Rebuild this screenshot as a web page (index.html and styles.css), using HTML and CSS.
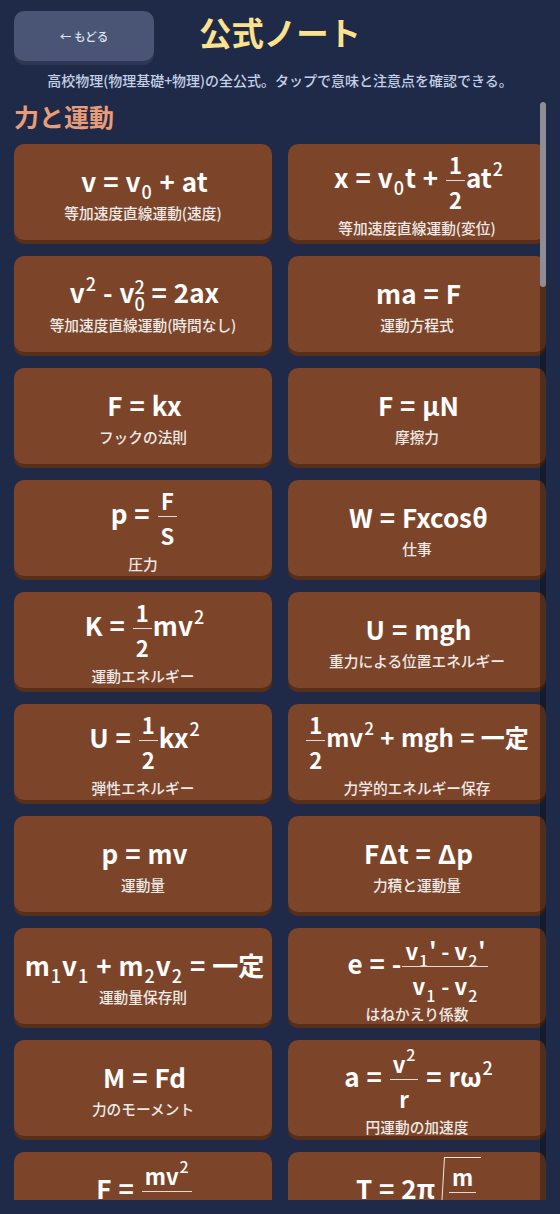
FILE: index.html
```html
<!DOCTYPE html>
<html lang="ja">
<head>
<meta charset="utf-8">
<title>公式ノート</title>
<link rel="stylesheet" href="styles.css">
</head>
<body>
<div class="page">
  <header class="header">
    <button class="back">← もどる</button>
    <h1 class="title">公式ノート</h1>
    <span></span>
  </header>
  <p class="lead">高校物理(物理基礎+物理)の全公式。タップで意味と注意点を確認できる。</p>
  <div class="scroll">
    <div class="track"></div>
    <div class="thumb"></div>
    <h2 class="section">力と運動</h2>
    <div class="grid">
      <div class="card"><div class="f">v = v<sub>0</sub> + at</div><div class="l">等加速度直線運動(速度)</div></div>
      <div class="card"><div class="f">x = v<sub>0</sub>t + <span class="frac"><span>1</span><span class="d">2</span></span>at<sup>2</sup></div><div class="l">等加速度直線運動(変位)</div></div>
      <div class="card"><div class="f">v<sup>2</sup> - v<span class="ss"><sup>2</sup><sub>0</sub></span> = 2ax</div><div class="l">等加速度直線運動(時間なし)</div></div>
      <div class="card"><div class="f">ma = F</div><div class="l">運動方程式</div></div>
      <div class="card"><div class="f">F = kx</div><div class="l">フックの法則</div></div>
      <div class="card"><div class="f">F = μN</div><div class="l">摩擦力</div></div>
      <div class="card"><div class="f">p = <span class="frac"><span>F</span><span class="d">S</span></span></div><div class="l">圧力</div></div>
      <div class="card"><div class="f">W = Fxcosθ</div><div class="l">仕事</div></div>
      <div class="card"><div class="f">K = <span class="frac"><span>1</span><span class="d">2</span></span>mv<sup>2</sup></div><div class="l">運動エネルギー</div></div>
      <div class="card"><div class="f">U = mgh</div><div class="l">重力による位置エネルギー</div></div>
      <div class="card"><div class="f">U = <span class="frac"><span>1</span><span class="d">2</span></span>kx<sup>2</sup></div><div class="l">弾性エネルギー</div></div>
      <div class="card"><div class="f fit"><span class="frac"><span>1</span><span class="d">2</span></span>mv<sup>2</sup> + mgh = 一定</div><div class="l">力学的エネルギー保存</div></div>
      <div class="card"><div class="f">p = mv</div><div class="l">運動量</div></div>
      <div class="card"><div class="f">FΔt = Δp</div><div class="l">力積と運動量</div></div>
      <div class="card"><div class="f">m<sub>1</sub>v<sub>1</sub> + m<sub>2</sub>v<sub>2</sub> = 一定</div><div class="l">運動量保存則</div></div>
      <div class="card"><div class="f low2">e = -<span class="frac"><span>v<sub>1</sub>' - v<sub>2</sub>'</span><span class="d">v<sub>1</sub> - v<sub>2</sub></span></span></div><div class="l">はねかえり係数</div></div>
      <div class="card"><div class="f">M = Fd</div><div class="l">力のモーメント</div></div>
      <div class="card"><div class="f low">a = <span class="frac"><span>v<sup>2</sup></span><span class="d">r</span></span> = rω<sup>2</sup></div><div class="l">円運動の加速度</div></div>
      <div class="card"><div class="f low">F = <span class="frac"><span>mv<sup>2</sup></span><span class="d">r</span></span></div><div class="l">向心力</div></div>
      <div class="card"><div class="f low">T = 2π <svg class="rad" viewBox="0 0 6 69" aria-hidden="true"><path d="M0 50 L1 49 L1.5 68 L5.5 .5 L6 .5"/></svg><span class="root"><span class="frac"><span>m</span><span class="d">k</span></span></span></div><div class="l">単振動の周期</div></div>
    </div>
  </div>
</div>
</body>
</html>
```
FILE: styles.css
```css
* { box-sizing: border-box; }
html, body { margin: 0; height: 100%; }
body {
  background: #1f2a48;
  color: #fff;
  font-family: "Noto Sans CJK JP", "Noto Sans", sans-serif;
  overflow: hidden;
}
.page { height: 1214px; display: flex; flex-direction: column; padding: 11px 14px 14px; }
.header { display: grid; grid-template-columns: 1fr auto 1fr; align-items: start; height: 54px; }
.back {
  width: 140px; height: 50px; border: 0; border-radius: 10px;
  background: #4a5575; color: #dfe4ee;
  box-shadow: 0 4px 1px #2e3855;
  font: 500 11.5px "Noto Sans CJK JP", sans-serif;
}
.title {
  margin: 0; font-size: 32.4px; line-height: 42px; font-weight: 700;
  color: #fde28d;
}
.lead {
  margin: 0; height: 37px; font-size: 14px; line-height: 31px; font-weight: 500;
  color: #c3d0e6; text-align: center; white-space: nowrap;
}
.scroll { position: relative; height: 1098px; width: 532px; overflow: hidden; }
.track { position: absolute; right: 0; top: 0; bottom: 0; width: 6px; background: rgba(0,0,0,.34); z-index: 1; }
.thumb { position: absolute; right: 0; top: 0; width: 6px; height: 185px; border-radius: 3px; background: #8d8d96; z-index: 2; }
.section { margin: 0; height: 42px; font-size: 25px; line-height: 29px; font-weight: 700; color: #e89c78; }
.grid { display: grid; grid-template-columns: 258px 258px; column-gap: 16px; row-gap: 16px; }
.card {
  height: 96px; border-radius: 10px; background: #7c452a;
  box-shadow: 0 4px 1px #5a2f1a;
  display: flex; flex-direction: column; align-items: center; justify-content: center;
}
.f { white-space: nowrap; font-size: 26px; font-weight: 700; line-height: 38px; word-spacing: 1px; padding-left: 3px; }
.fit { font-size: 24px; padding-left: 0; }
.fit sup { font-size: 17px; }
.low { padding-top: 6px; }
.low2 { padding-top: 3px; }
.l { font-size: 14.7px; font-weight: 500; line-height: 20px; color: #efe9e6; margin-top: 3px; }
sub, sup { font-size: 18px; line-height: 0; font-weight: 500; }
sub { vertical-align: -7px; margin: 0 1px; }
sup { vertical-align: 12px; margin-left: 1px; }
.frac { display: inline-flex; flex-direction: column; align-items: center; vertical-align: middle; font-size: 22px; line-height: 32px; margin: 0 1px; word-spacing: 0; }
.frac > span { padding: 2px 3px 0; display: block; }
.frac .d { border-top: 1.5px solid #e5d9d2; align-self: stretch; text-align: center; }
.frac sub, .frac sup { font-size: 16px; }
.ss { display: inline-flex; flex-direction: column; vertical-align: middle; line-height: 1; font-size: 18px; }
.ss sup, .ss sub { line-height: 17px; vertical-align: baseline; margin: 0; }
.rad { width: 6px; height: 69px; margin-left: -3px; vertical-align: middle; fill: none; stroke: #efe6e0; stroke-width: 1; }
.root { display: inline-block; vertical-align: middle; border-top: 1px solid #efe6e0; padding: 0 4px; margin-left: -1px; }
```
